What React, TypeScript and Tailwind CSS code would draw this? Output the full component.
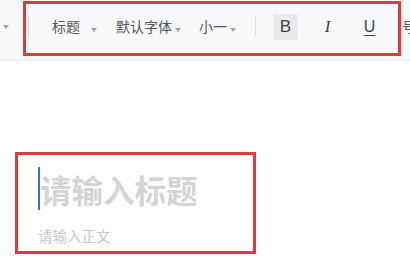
import React from "react";

const Caret = () => (
  <span className="inline-block w-0 h-0 border-l-[3px] border-r-[3px] border-t-[4px] border-l-transparent border-r-transparent border-t-[#a0a0a0]" />
);

export default function App() {
  return (
    <div
      className="relative w-[410px] h-[263px] bg-white overflow-hidden"
      style={{ fontFamily: '"Noto Sans CJK SC", "Liberation Sans", sans-serif' }}
    >
      <div className="h-[61px] bg-[#f7f8fa] border-b border-[#ebedf0] flex items-center pb-[7px] text-[14px] text-[#555] whitespace-nowrap overflow-hidden [&>*]:shrink-0">
        <div className="w-[10px] flex justify-end mr-[19px] -ml-[1px]">
          <Caret />
        </div>
        <div className="w-px h-[20px] bg-[#dcdfe3]" />
        <div className="flex items-center ml-[23px]">
          <span>标题</span>
          <span className="ml-[11px]"><Caret /></span>
        </div>
        <div className="flex items-center ml-[19px]">
          <span>默认字体</span>
          <span className="ml-[3px]"><Caret /></span>
        </div>
        <div className="flex items-center ml-[18px]">
          <span>小一</span>
          <span className="ml-[3px]"><Caret /></span>
        </div>
        <div className="w-px h-[20px] bg-[#dcdfe3] ml-[19px]" />
        <div
          className="ml-[17px] w-[25px] h-[26px] bg-[#ebebec] rounded-[2px] flex items-center justify-center text-[17px] text-[#444]"
          style={{ fontFamily: '"Liberation Sans", sans-serif' }}
        >
          B
        </div>
        <div
          className="ml-[17px] w-[25px] h-[26px] flex items-center justify-center text-[17px] italic text-[#444]"
          style={{ fontFamily: '"Liberation Serif", serif' }}
        >
          I
        </div>
        <div
          className="ml-[17px] w-[25px] h-[26px] flex items-center justify-center text-[16px] underline underline-offset-[3px] text-[#444]"
          style={{ fontFamily: '"Liberation Sans", sans-serif' }}
        >
          U
        </div>
        <div className="ml-[20px] text-[14px] text-[#555]">号</div>
      </div>

      <div className="pl-[38px] pt-[103px]">
        <div className="relative flex items-center">
          <div className="absolute left-0 top-[3px] w-[1.5px] h-[43px] bg-[#3a6fd8]" />
          <div className="pl-[2px] text-[31.5px] leading-[50px] font-bold text-[#d4d4d4]">请输入标题</div>
        </div>
        <div className="mt-[12px] text-[14.5px] leading-[20px] text-[#c8c8c8]">请输入正文</div>
      </div>

      <div className="absolute left-[23px] top-[1px] w-[378px] h-[55px] border-[3px] border-[#e03a3a]" />
      <div className="absolute left-[15px] top-[152px] w-[241px] h-[102px] border-[3px] border-[#e03a3a]" />
    </div>
  );
}
